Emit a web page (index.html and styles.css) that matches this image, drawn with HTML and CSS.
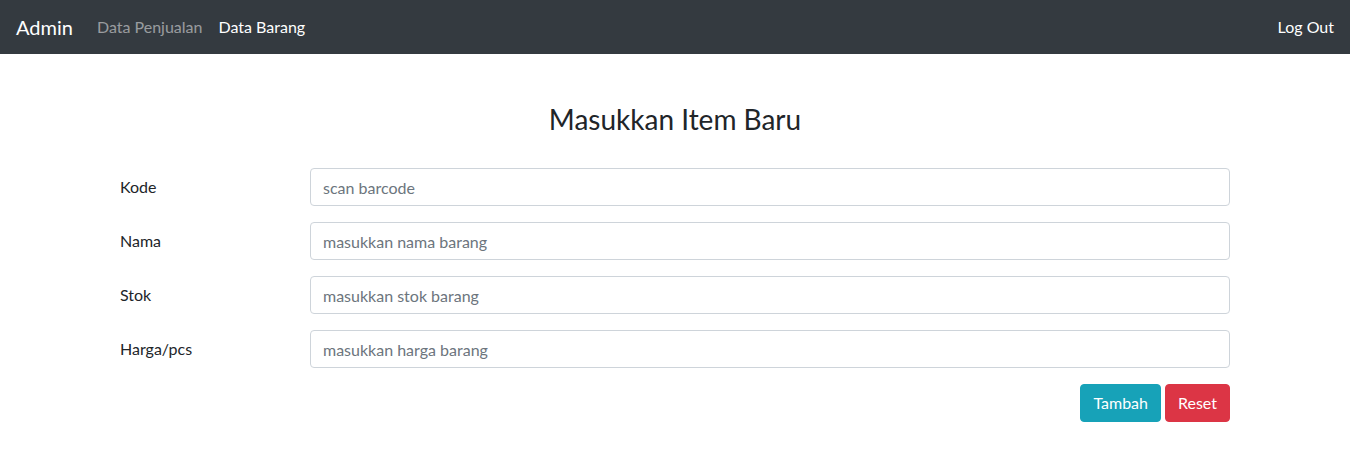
FILE: index.html
```html
<!DOCTYPE html>
<html lang="id">
<head>
<meta charset="utf-8">
<title>Admin - Data Barang</title>
<link rel="stylesheet" href="styles.css">
</head>
<body>
<nav class="navbar">
  <a class="brand" href="#">Admin</a>
  <ul class="nav-links">
    <li><a class="nav-link" href="#">Data Penjualan</a></li>
    <li><a class="nav-link active" href="#">Data Barang</a></li>
  </ul>
  <a class="logout" href="#">Log Out</a>
</nav>
<main class="container">
  <h3 class="title">Masukkan Item Baru</h3>
  <form class="form">
    <div class="form-row">
      <label class="form-label" for="kode">Kode</label>
      <div class="form-field"><input class="form-control" id="kode" type="text" placeholder="scan barcode"></div>
    </div>
    <div class="form-row">
      <label class="form-label" for="nama">Nama</label>
      <div class="form-field"><input class="form-control" id="nama" type="text" placeholder="masukkan nama barang"></div>
    </div>
    <div class="form-row">
      <label class="form-label" for="stok">Stok</label>
      <div class="form-field"><input class="form-control" id="stok" type="text" placeholder="masukkan stok barang"></div>
    </div>
    <div class="form-row">
      <label class="form-label" for="harga">Harga/pcs</label>
      <div class="form-field"><input class="form-control" id="harga" type="text" placeholder="masukkan harga barang"></div>
    </div>
    <div class="actions">
      <button class="btn btn-info" type="submit">Tambah</button>
      <button class="btn btn-danger" type="reset">Reset</button>
    </div>
  </form>
</main>
</body>
</html>
```
FILE: styles.css
```css
* { box-sizing: border-box; }
body {
  margin: 0;
  font-family: Lato, "Open Sans", sans-serif;
  font-size: 16px;
  line-height: 1.5;
  color: #212529;
  background: #fff;
}
a { text-decoration: none; }
.navbar {
  height: 54px;
  background: #343a40;
  display: flex;
  align-items: center;
  padding: 0 16px;
}
.brand {
  color: #fff;
  font-size: 20px;
  margin-right: 16px;
}
.nav-links {
  list-style: none;
  margin: 0;
  padding: 0;
  display: flex;
  flex: 1;
}
.nav-link {
  display: block;
  padding: 8px 8px;
  color: rgba(255,255,255,.5);
}
.nav-link.active { color: #fff; }
.logout { color: #fff; }
.container {
  width: 1110px;
  margin: 0 auto;
  padding-top: 48px;
}
.title {
  margin: 0 0 32px;
  font-size: 28px;
  font-weight: 400;
  line-height: 34px;
  text-align: center;
}
.form-row {
  display: flex;
  align-items: center;
  margin-bottom: 16px;
}
.form-label {
  width: 190px;
  flex: none;
}
.form-field { flex: 1; }
.form-control {
  display: block;
  width: 100%;
  height: 38px;
  padding: 6px 12px;
  font: inherit;
  color: #495057;
  border: 1px solid #ced4da;
  border-radius: 4px;
  background: #fff;
}
.form-control::placeholder { color: #6c757d; }
.actions {
  display: flex;
  justify-content: flex-end;
  gap: 4px;
}
.btn {
  height: 38px;
  padding: 6px 12px;
  font: inherit;
  color: #fff;
  border: 1px solid transparent;
  border-radius: 4px;
  cursor: pointer;
}
.btn-info { background: #17a2b8; border-color: #17a2b8; }
.btn-danger { background: #dc3545; border-color: #dc3545; }
```
